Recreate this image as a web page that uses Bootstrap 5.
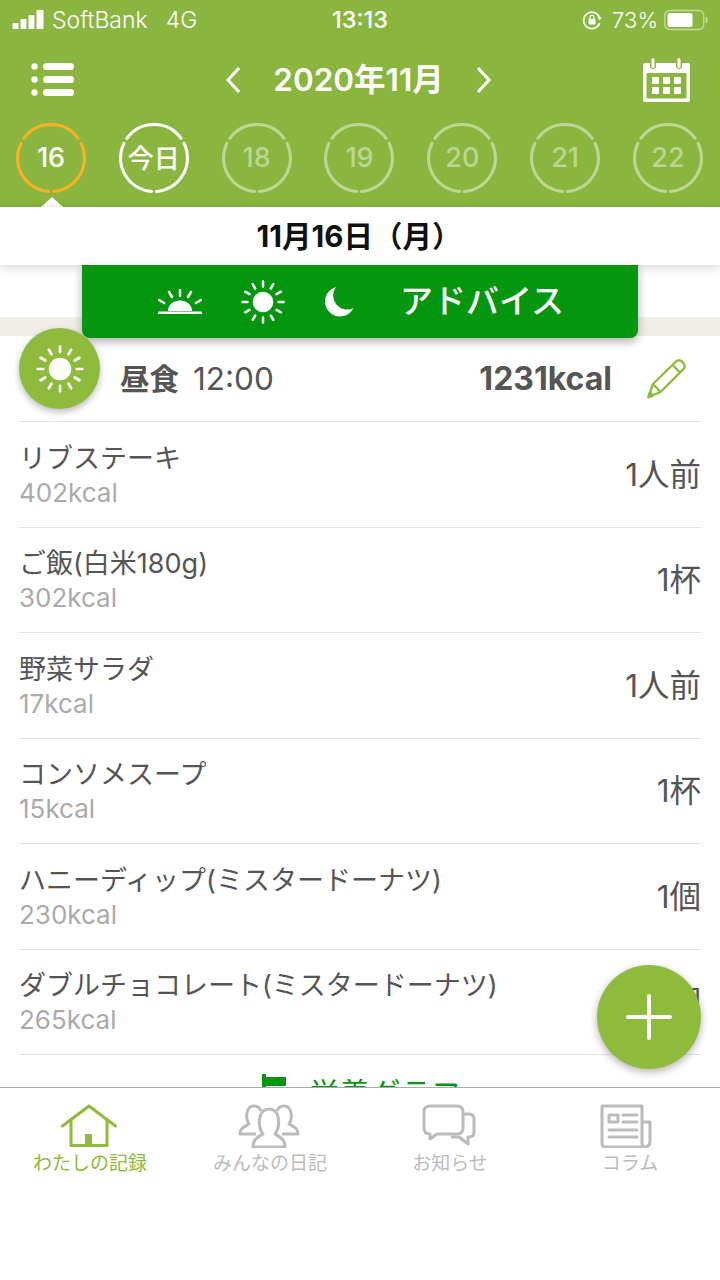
<!DOCTYPE html>
<html lang="ja"><head><meta charset="utf-8">
<title>わたしの記録</title>
<link href="https://cdn.jsdelivr.net/npm/bootstrap@5.3.0/dist/css/bootstrap.min.css" rel="stylesheet">
<style>
html,body{margin:0;background:#fff}
body{font-family:Inter,"Noto Sans CJK JP",sans-serif;color:#555}
.app-shell{width:720px;height:1280px;position:relative;overflow:hidden;background:#fff}
.head-zone{background:#8ab63f;height:207px;color:#fff;position:relative}
.status-line{height:40px;padding:0 12px;font-size:23px;font-weight:300;position:relative}
.status-time{position:absolute;left:0;right:0;top:7px;text-align:center;font-size:23.500px;font-weight:500;line-height:26px}
.carrier{margin-left:7px}.net{margin-left:18px}
.status-right{margin-left:auto}
.percent-text{margin:0 6px 0 10px;font-size:22px}
.nav-line{height:80px;padding:0 30px 0 31px}
.month-pick{gap:32px;font-size:31.500px;font-weight:600;margin-left:-1px}
.day-line{padding:3px 17px 0 16px;height:73px}
.day-ring{width:70px;height:70px;position:relative;color:rgba(255,255,255,.45)}
.day-ring svg{position:absolute;inset:0}
.day-num{position:absolute;inset:0;font-size:27px;font-weight:500}
.today-num{font-size:26px}
.ring-now{color:#fdb022}.ring-now .day-num{color:#fff}
.ring-today{color:#fff}
.pointer{position:absolute;left:41px;top:197px;width:0;height:0;border-left:11px solid transparent;border-right:11px solid transparent;border-bottom:10px solid #fff}
.date-strip{height:58px;background:#fff;color:#111;font-size:29.500px;font-weight:700;box-shadow:0 2px 10px rgba(0,0,0,.18);position:relative;z-index:2;padding-left:-2px;padding-right:2px}
.gap-white{height:52px}
.gap-beige{height:19px;background:#f0eee8}
.advice-btn{position:absolute;left:82px;top:265px;width:556px;height:73px;background:#05960f;color:#fff;border-radius:0 0 8px 8px;box-shadow:0 4px 10px rgba(0,0,0,.3);z-index:3;font-size:33px;font-weight:500;padding-left:76px}
.advice-label{margin-left:46px}
.advice-moon{margin-left:39px}.advice-sun{margin-left:39px}
.meal-badge{position:absolute;left:19px;top:328px;width:81px;height:81px;border-radius:50%;background:#8fbb3c;box-shadow:0 3px 7px rgba(0,0,0,.28);z-index:4}
.food-area{height:751px;overflow:hidden;padding:0 19px}
.meal-head{height:86px;border-bottom:1px solid #e4e4e4;padding-left:101px;padding-top:1px;position:relative}
.meal-name{font-size:29.500px;font-weight:700}
.meal-clock{font-size:31.500px;margin-left:14px}
.meal-sum{font-size:32px;font-weight:700;margin-left:auto;margin-right:89px}
.pencil-mark{flex-shrink:0;margin-left:-54px;margin-right:15px}
.food-row{height:105.500px;border-bottom:1px solid #e4e4e4}
.food-title{font-size:27px;line-height:34px;margin-top:3px}
.food-kcal{font-size:26px;line-height:34px;color:#aaa}
.food-qty{font-size:31.500px}
.graph-link{height:40px;color:#05960f;font-size:30.500px;line-height:40px;padding:19px 0 0 243px;gap:23px;white-space:nowrap}
.fab-add{position:absolute;left:597px;top:965px;width:104px;height:104px;border-radius:50%;background:#8fbb3c;box-shadow:0 3px 9px rgba(0,0,0,.3);z-index:5}
.tab-strip{height:193px;border-top:1px solid #aaa;background:#fff;position:relative;z-index:4}
.tab-cell{width:180px;color:#bbb;font-size:19px;padding-top:16px}
.tab-cell svg{display:block;height:44px;margin-left:-2px}
.tab-on{color:#8fbb3c}
.tab-text{line-height:24px;margin-top:4px;white-space:nowrap}
.tab-news svg{margin-left:-8px}
</style></head>
<body>
<svg width="0" height="0" class="d-none">
<defs>
<symbol id="ring" viewBox="0 0 70 70"><path d="M7.900 15.300A33.500 33.500 0 0 1 62.100 15.300M65.100 20.300A33.500 33.500 0 0 1 37.300 68.400M32.700 68.400A33.500 33.500 0 0 1 4.900 20.300" fill="none" stroke="currentColor" stroke-width="3" stroke-linecap="round"/></symbol>
<symbol id="sun" viewBox="0 0 44 44"><circle cx="22" cy="22" r="10.300" fill="currentColor"/><g stroke="currentColor" stroke-width="2.500" stroke-linecap="round"><path d="M22 1.500V6.500M22 37.500V42.500M1.500 22H6.500M37.500 22H42.500M11.700 4.200L14.200 8.500M29.800 35.500L32.300 39.800M4.200 11.700L8.500 14.200M35.500 29.800L39.800 32.300M32.300 4.200L29.800 8.500M14.200 35.500L11.700 39.800M39.800 11.700L35.500 14.200M8.500 29.800L4.200 32.300"/></g></symbol>
</defs></svg>
<div class="app-shell">
  <div class="head-zone">
    <div class="status-line d-flex align-items-center">
      <svg width="33" height="20" viewBox="0 0 33 20"><g fill="#fff"><rect x="0.500" y="13" width="6" height="6" rx="1"/><rect x="8.500" y="9" width="6" height="10" rx="1"/><rect x="16.500" y="5" width="6" height="14" rx="1"/><rect x="24.500" y="0" width="7" height="19" rx="1"/></g></svg>
      <span class="carrier">SoftBank</span><span class="net">4G</span>
      <div class="status-time">13:13</div>
      <div class="status-right d-flex align-items-center">
        <svg width="20" height="20" viewBox="0 0 20 20" fill="none" stroke="#fff" stroke-width="1.600"><path d="M17.500 7.500A8.200 8.200 0 1 0 17.600 13"/><path d="M15.200 7.200L19.600 7.200L17.800 10.500Z" fill="#fff" stroke="none"/><rect x="6.500" y="9" width="7" height="5.500" rx=".8" fill="#fff" stroke="none"/><path d="M8 9V7.400a2 2 0 0 1 4 0V9" stroke-width="1.200"/></svg>
        <span class="percent-text">73%</span>
        <svg width="44" height="22" viewBox="0 0 44 22"><rect x=".75" y="1.500" width="39" height="19" rx="5" fill="none" stroke="rgba(255,255,255,.5)" stroke-width="1.300"/><rect x="3.500" y="4" width="25" height="14" rx="2.500" fill="#fff"/><rect x="41.500" y="8" width="2" height="6" rx="1" fill="rgba(255,255,255,.5)"/></svg>
      </div>
    </div>
    <div class="nav-line d-flex align-items-center justify-content-between">
      <svg width="44" height="34" viewBox="0 0 44 34" fill="#fff"><circle cx="3.500" cy="3.500" r="3.200"/><circle cx="3.500" cy="16.500" r="3.200"/><circle cx="3.500" cy="29.500" r="3.200"/><rect x="12" y="0" width="31" height="7" rx="3.500"/><rect x="12" y="13" width="31" height="7" rx="3.500"/><rect x="12" y="26" width="31" height="7" rx="3.500"/></svg>
      <div class="month-pick d-flex align-items-center">
        <svg width="16" height="28" viewBox="0 0 16 28" fill="none" stroke="#fff" stroke-width="3"><path d="M14 2L3 14L14 26"/></svg>
        <span>2020年11月</span>
        <svg width="16" height="28" viewBox="0 0 16 28" fill="none" stroke="#fff" stroke-width="3"><path d="M2 2L13 14L2 26"/></svg>
      </div>
      <svg width="47" height="44" viewBox="0 0 47 44"><path d="M2 5H7V8a3 3 0 0 0 6 0V5H33V8a3 3 0 0 0 6 0V5H45a2 2 0 0 1 2 2V42a2 2 0 0 1-2 2H2a2 2 0 0 1-2-2V7a2 2 0 0 1 2-2Z" fill="#fff"/><rect x="3.500" y="15" width="40" height="25.500" rx="1" fill="#8ab63f"/><g fill="#fff"><rect x="9" y="19" width="7" height="7" rx="1"/><rect x="20" y="19" width="7" height="7" rx="1"/><rect x="31" y="19" width="7" height="7" rx="1"/><rect x="9" y="29" width="7" height="7" rx="1"/><rect x="20" y="29" width="7" height="7" rx="1"/><rect x="31" y="29" width="7" height="7" rx="1"/></g><rect x="8.500" y="0" width="3" height="10" rx="1.500" fill="#fff"/><rect x="34.500" y="0" width="3" height="10" rx="1.500" fill="#fff"/></svg>
    </div>
    <div class="day-line d-flex justify-content-between">
      <div class="day-ring ring-now"><svg width="70" height="70"><use href="#ring"/></svg><div class="day-num d-flex align-items-center justify-content-center">16</div></div>
      <div class="day-ring ring-today"><svg width="70" height="70"><use href="#ring"/></svg><div class="day-num today-num d-flex align-items-center justify-content-center">今日</div></div>
      <div class="day-ring"><svg width="70" height="70"><use href="#ring"/></svg><div class="day-num d-flex align-items-center justify-content-center">18</div></div>
      <div class="day-ring"><svg width="70" height="70"><use href="#ring"/></svg><div class="day-num d-flex align-items-center justify-content-center">19</div></div>
      <div class="day-ring"><svg width="70" height="70"><use href="#ring"/></svg><div class="day-num d-flex align-items-center justify-content-center">20</div></div>
      <div class="day-ring"><svg width="70" height="70"><use href="#ring"/></svg><div class="day-num d-flex align-items-center justify-content-center">21</div></div>
      <div class="day-ring"><svg width="70" height="70"><use href="#ring"/></svg><div class="day-num d-flex align-items-center justify-content-center">22</div></div>
    </div>
    <div class="pointer"></div>
  </div>
  <div class="date-strip d-flex align-items-center justify-content-center">11月16日（月）</div>
  <div class="gap-white"></div>
  <div class="gap-beige"></div>

  <div class="advice-btn d-flex align-items-center">
    <svg width="44" height="26" viewBox="0 0 44 26"><path d="M10 22A12 10.500 0 0 1 34 22Z" fill="#fff"/><rect x="0" y="22.500" width="44" height="2.500" rx="1" fill="#fff"/><g stroke="#fff" stroke-width="2.500" stroke-linecap="round"><path d="M22 1V7M11 3L14 8M33 3L30 8M1 11L6 14M43 11L38 14"/></g></svg>
    <svg class="advice-sun text-white" width="44" height="44"><use href="#sun"/></svg>
    <svg class="advice-moon" width="30" height="30" viewBox="0 0 30 30"><path d="M12 0A15 15 0 1 0 29.500 21A14 14 0 0 1 12 0Z" fill="#fff"/></svg>
    <span class="advice-label">アドバイス</span>
  </div>
  <div class="meal-badge d-flex align-items-center justify-content-center text-white"><svg width="48" height="48"><use href="#sun"/></svg></div>

  <div class="food-area">
    <div class="meal-head d-flex align-items-center">
      <span class="meal-name">昼食</span><span class="meal-clock">12:00</span>
      <span class="meal-sum">1231kcal</span>
      <svg class="pencil-mark" width="39" height="40" viewBox="0 0 39 40" fill="none" stroke="#8fbb3c" stroke-width="2.400" stroke-linejoin="round"><path d="M1.500 38L6 25L29 2.500Q32 0 35 2.500L37 5Q38.500 8 36.500 10L13.500 33Z"/><path d="M6 25L13.500 33M25.500 6L33.500 14"/><path d="M1.500 38L3 33.500L6 36.500Z" fill="#8fbb3c"/></svg>
    </div>
    <div class="food-row d-flex align-items-center justify-content-between"><div><div class="food-title">リブステーキ</div><div class="food-kcal">402kcal</div></div><div class="food-qty">1人前</div></div>
    <div class="food-row d-flex align-items-center justify-content-between"><div><div class="food-title">ご飯(白米180g)</div><div class="food-kcal">302kcal</div></div><div class="food-qty">1杯</div></div>
    <div class="food-row d-flex align-items-center justify-content-between"><div><div class="food-title">野菜サラダ</div><div class="food-kcal">17kcal</div></div><div class="food-qty">1人前</div></div>
    <div class="food-row d-flex align-items-center justify-content-between"><div><div class="food-title">コンソメスープ</div><div class="food-kcal">15kcal</div></div><div class="food-qty">1杯</div></div>
    <div class="food-row d-flex align-items-center justify-content-between"><div><div class="food-title">ハニーディップ(ミスタードーナツ)</div><div class="food-kcal">230kcal</div></div><div class="food-qty">1個</div></div>
    <div class="food-row d-flex align-items-center justify-content-between"><div><div class="food-title">ダブルチョコレート(ミスタードーナツ)</div><div class="food-kcal">265kcal</div></div><div class="food-qty">1個</div></div>
    <div class="graph-link d-flex align-items-start">
      <svg width="24" height="40" viewBox="0 0 24 40" fill="#05960f" class="flex-shrink-0"><rect x="0" y="0" width="4" height="40"/><rect x="0" y="3" width="24" height="9"/></svg>
      <span>栄養グラフ</span>
    </div>
  </div>

  <div class="fab-add d-flex align-items-center justify-content-center">
    <svg width="46" height="46" viewBox="0 0 46 46" stroke="#fff" stroke-width="4" stroke-linecap="round"><path d="M23 2V44M2 23H44"/></svg>
  </div>

  <div class="tab-strip d-flex">
    <div class="tab-cell tab-on d-flex flex-column align-items-center">
      <svg width="56" height="44" viewBox="0 0 56 44" fill="none" stroke="#8fbb3c" stroke-width="3" stroke-linecap="round" stroke-linejoin="round"><path d="M1.500 22L28 2L54.500 22"/><path d="M10 17V41.500H46V17"/><rect x="24" y="30" width="7" height="11" fill="#8fbb3c" stroke="none"/></svg>
      <div class="tab-text">わたしの記録</div>
    </div>
    <div class="tab-cell d-flex flex-column align-items-center">
      <svg width="62" height="44" viewBox="0 0 62 44" fill="none" stroke="#bbb" stroke-width="3" stroke-linejoin="round"><path d="M18 30H2C2 24 6 23 11 20C7 14 8 2 16 2C20 2 22 4 23 7"/><path d="M44 30H60C60 24 56 23 51 20C55 14 54 2 46 2C42 2 40 4 39 7"/><path d="M15 43C15 35 20 33 25 30C19 22 20 5 31 5C42 5 43 22 37 30C42 33 47 35 47 43Z" fill="#fff"/></svg>
      <div class="tab-text">みんなの日記</div>
    </div>
    <div class="tab-cell d-flex flex-column align-items-center">
      <svg width="54" height="44" viewBox="0 0 54 44" fill="none" stroke="#bbb" stroke-width="3" stroke-linejoin="round"><path d="M41 10H47Q52 10 52 15V28Q52 33 47 33H46V40L37 33H29"/><path d="M8 2H35Q41 2 41 8V24Q41 30 35 30H15L8 35V30Q2 30 2 24V8Q2 2 8 2Z" fill="#fff"/></svg>
      <div class="tab-text">お知らせ</div>
    </div>
    <div class="tab-cell tab-news d-flex flex-column align-items-center">
      <svg width="52" height="44" viewBox="0 0 52 44" fill="none" stroke="#bbb" stroke-width="3" stroke-linejoin="round"><path d="M42 43H6Q2 43 2 39V2H42V18H50V37Q50 43 44 43Q42 43 42 38V18"/><rect x="9" y="11" width="9" height="7"/><path d="M23 11H37M23 18H37M9 26H37M9 33H37" stroke-linecap="round"/></svg>
      <div class="tab-text">コラム</div>
    </div>
  </div>
</div>
<script src="https://cdn.jsdelivr.net/npm/bootstrap@5.3.0/dist/js/bootstrap.bundle.min.js"></script>
</body></html>
